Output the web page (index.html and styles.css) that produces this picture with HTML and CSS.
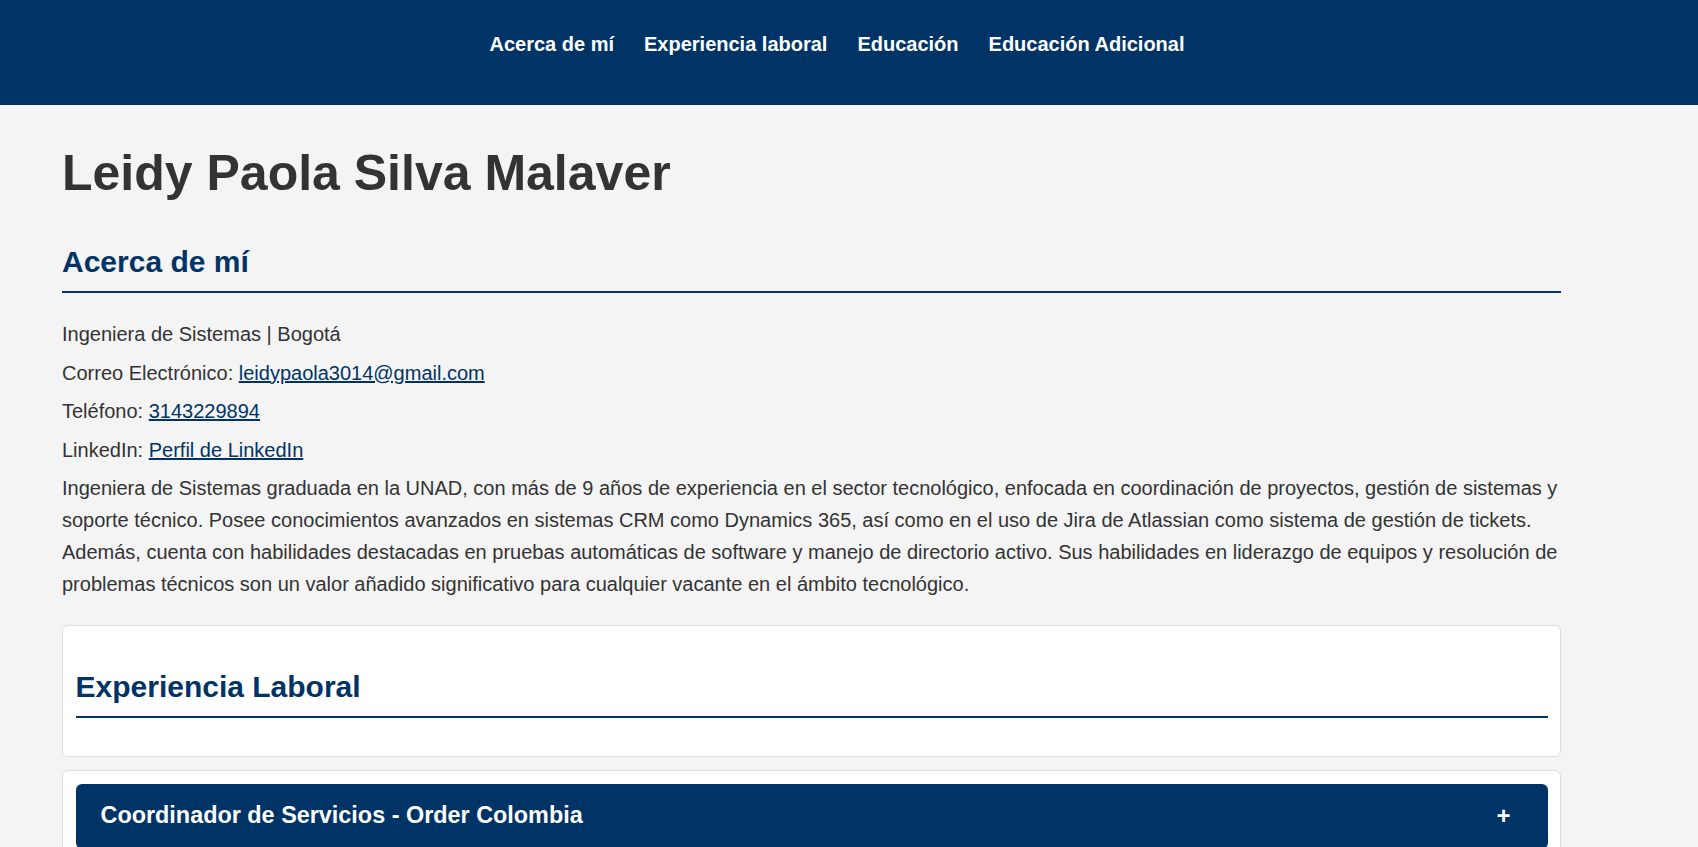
FILE: index.html
```html
<!DOCTYPE html>
<html lang="es">
<head>
<meta charset="utf-8">
<title>Leidy Paola Silva Malaver</title>
<link rel="stylesheet" href="styles.css">
</head>
<body>
<header class="site-header">
  <nav class="nav">
    <a class="nav-link" href="#acerca">Acerca de mí</a>
    <a class="nav-link" href="#experiencia">Experiencia laboral</a>
    <a class="nav-link" href="#educacion">Educación</a>
    <a class="nav-link" href="#adicional">Educación Adicional</a>
  </nav>
</header>
<main class="main">
  <h1 class="name">Leidy Paola Silva Malaver</h1>
  <section class="about" id="acerca">
    <h2 class="section-title">Acerca de mí</h2>
    <p class="info">Ingeniera de Sistemas | Bogotá</p>
    <p class="info">Correo Electrónico: <a class="link" href="#">leidypaola3014@gmail.com</a></p>
    <p class="info">Teléfono: <a class="link" href="#">3143229894</a></p>
    <p class="info">LinkedIn: <a class="link" href="#">Perfil de LinkedIn</a></p>
    <p class="info">Ingeniera de Sistemas graduada en la UNAD, con más de 9 años de experiencia en el sector tecnológico, enfocada en coordinación de proyectos, gestión de sistemas y soporte técnico. Posee conocimientos avanzados en sistemas CRM como Dynamics 365, así como en el uso de Jira de Atlassian como sistema de gestión de tickets. Además, cuenta con habilidades destacadas en pruebas automáticas de software y manejo de directorio activo. Sus habilidades en liderazgo de equipos y resolución de problemas técnicos son un valor añadido significativo para cualquier vacante en el ámbito tecnológico.</p>
  </section>
  <section class="card" id="experiencia">
    <h2 class="section-title card-title">Experiencia Laboral</h2>
  </section>
  <section class="card">
    <div class="job-head">
      <h3 class="job-title">Coordinador de Servicios - Order Colombia</h3>
      <span class="toggle">+</span>
    </div>
  </section>
  <section class="card">
    <div class="job-head">
      <h3 class="job-title">Analista de Soporte Técnico</h3>
      <span class="toggle">+</span>
    </div>
  </section>
</main>
</body>
</html>
```
FILE: styles.css
```css
html {
  scrollbar-width: none;
}
html::-webkit-scrollbar {
  display: none;
}
body {
  margin: 0;
  background: #f4f4f4;
  color: #333;
  font-family: "Liberation Sans", Arial, sans-serif;
  font-size: 20px;
}
.site-header {
  background: #003366;
  padding: 33px 24px 49px 0;
}
.nav {
  display: flex;
  justify-content: center;
  gap: 30px;
}
.nav-link {
  color: #fff;
  font-weight: bold;
  font-size: 20px;
  line-height: 23px;
  text-decoration: none;
}
.main {
  max-width: 1499px;
  padding: 0 62px;
}
.name {
  font-size: 50px;
  line-height: 58px;
  margin: 39px 0 42px;
  color: #333;
}
.section-title {
  font-size: 30px;
  line-height: 35px;
  color: #003366;
  margin: 0 0 25px;
  padding-bottom: 12px;
  border-bottom: 2px solid #003366;
}
.about {
  margin-bottom: 25px;
}
.info {
  margin: 6.5px 0;
  line-height: 32px;
}
.link {
  color: #003366;
  text-decoration: underline;
}
.card {
  background: #fff;
  border: 1px solid #ddd;
  border-radius: 6px;
  padding: 12.5px;
  margin-bottom: 13px;
}
.card-title {
  margin: 30px 0 26px;
}
.job-head {
  display: flex;
  justify-content: space-between;
  align-items: center;
  background: #003366;
  color: #fff;
  border-radius: 6px;
  padding: 18px 37px 20px 25px;
}
.job-title {
  margin: 0;
  font-size: 23.4px;
  line-height: 27px;
}
.toggle {
  font-size: 24px;
  font-weight: bold;
  line-height: 27px;
}
```
